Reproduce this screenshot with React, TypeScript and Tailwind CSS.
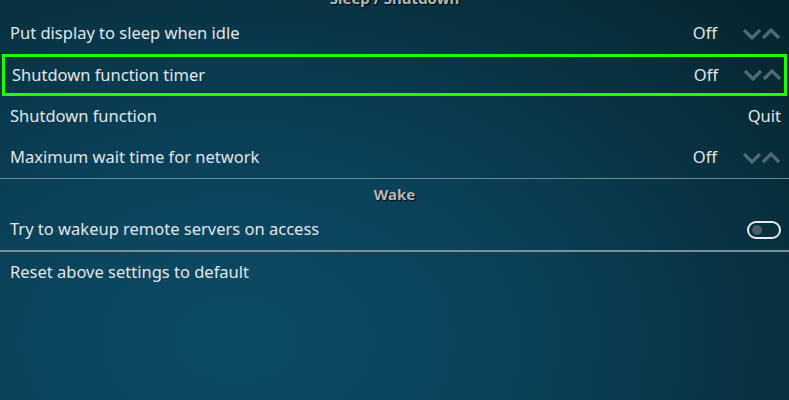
import React from 'react';

type Row = {
  label: string;
  value?: string;
  spinner?: boolean;
  toggle?: boolean;
  focused?: boolean;
};

const sleepRows: Row[] = [
  { label: 'Put display to sleep when idle', value: 'Off', spinner: true },
  { label: 'Shutdown function timer', value: 'Off', spinner: true, focused: true },
  { label: 'Shutdown function', value: 'Quit' },
  { label: 'Maximum wait time for network', value: 'Off', spinner: true },
];

// little down / up chevrons on the right side of spinner rows
function Spinner() {
  return (
    <svg width="38" height="12" viewBox="0 0 38 12" className="ml-[26px] shrink-0">
      <path d="M1 2 L9 10 L17 2" fill="none" stroke="#4f6a74" strokeWidth="3.2" />
      <path d="M20 10 L28 2 L36 10" fill="none" stroke="#4f6a74" strokeWidth="3.2" />
    </svg>
  );
}

function Toggle() {
  return (
    <div className="flex h-[18px] w-[34px] items-center rounded-full border-2 border-[#e8ecee] pl-[3px]">
      <div className="h-[10px] w-[10px] rounded-full bg-[#4a5f68]" />
    </div>
  );
}

function SettingRow({ row }: { row: Row }) {
  return (
    <div
      className={
        row.focused
          ? 'mx-[2px] flex h-[42px] items-center border-[3px] border-[#1cff00] pl-[7px] pr-[2px]'
          : 'flex h-[41px] items-center pl-[10px] pr-[8px]'
      }
    >
      <span className="flex-1">{row.label}</span>
      {row.value && <span>{row.value}</span>}
      {row.spinner && <Spinner />}
      {row.toggle && <Toggle />}
    </div>
  );
}

function GroupHeader({ title }: { title: string }) {
  return (
    <div className="flex h-[30px] items-center justify-center text-[15px] font-bold text-[#b4b8ba] [text-shadow:1px_1px_1px_#000]">
      {title}
    </div>
  );
}

export default function App() {
  return (
    <div
      className="h-[400px] w-[789px] overflow-hidden bg-[radial-gradient(ellipse_90%_120%_at_30%_85%,#0c4c67_0%,#0a3f56_45%,#06262f_100%)] text-[16.5px] text-[#e2e6e8]"
      style={{ fontFamily: '"Noto Sans", "Open Sans", sans-serif' }}
    >
      <div className="-mt-[17px]">
        <GroupHeader title="Sleep / Shutdown" />
        {sleepRows.map((row) => (
          <SettingRow key={row.label} row={row} />
        ))}
        <div className="h-px bg-[#6f8893]" />
        <GroupHeader title="Wake" />
        <SettingRow row={{ label: 'Try to wakeup remote servers on access', toggle: true }} />
        <div className="h-[2px] bg-[#7d8e94]" />
        <SettingRow row={{ label: 'Reset above settings to default' }} />
      </div>
    </div>
  );
}
